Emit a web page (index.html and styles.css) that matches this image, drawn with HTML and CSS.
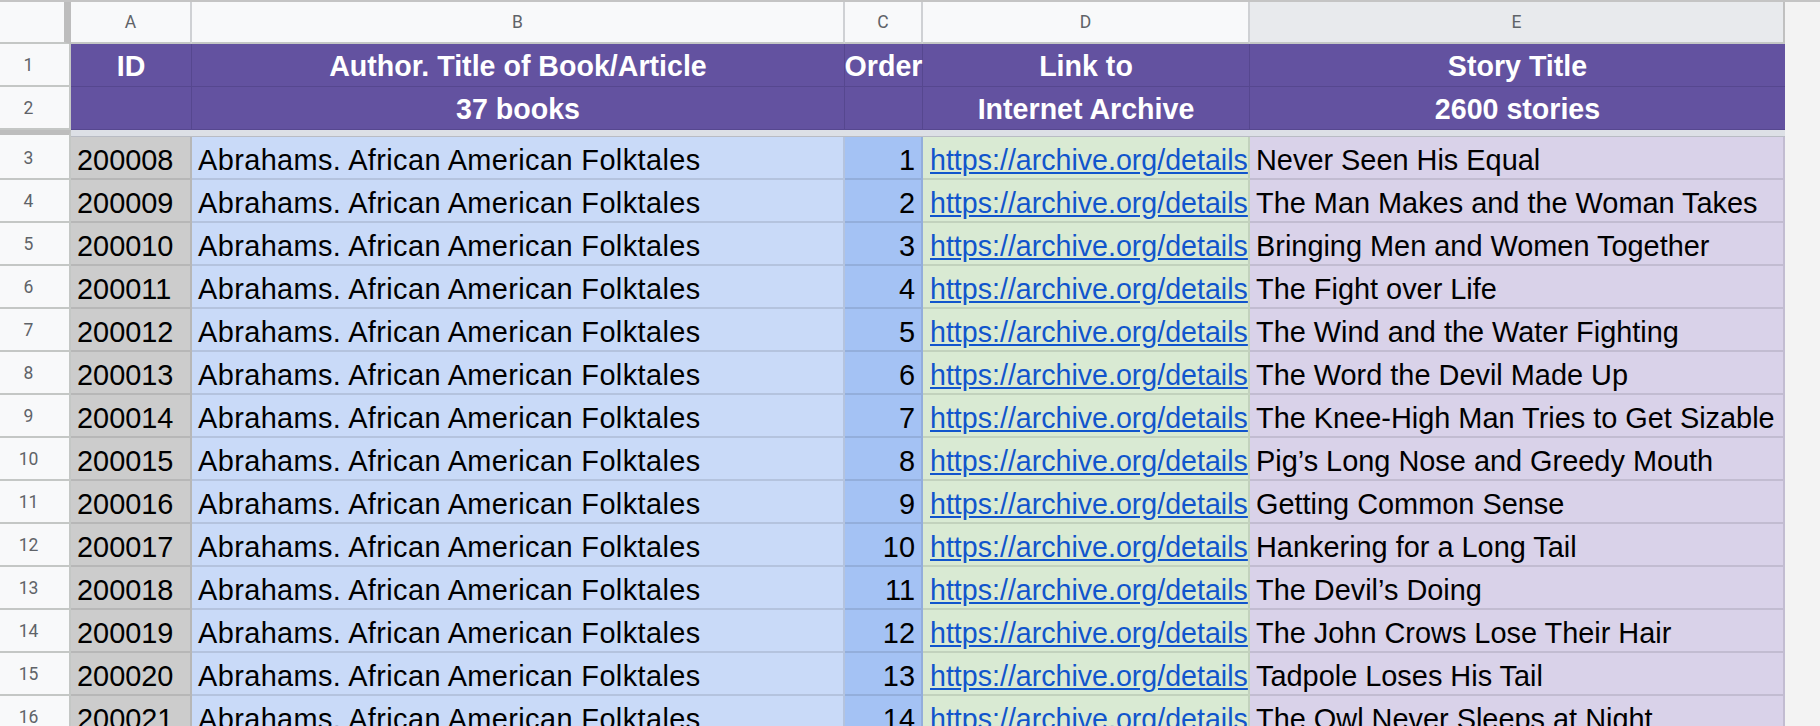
FILE: index.html
```html
<!DOCTYPE html>
<html lang="en">
<head>
<meta charset="utf-8">
<title>Folktales sheet</title>
<link rel="stylesheet" href="styles.css">
</head>
<body>
<div class="sheet">
  <div class="ch corner"></div>
  <div class="ch">A</div>
  <div class="ch">B</div>
  <div class="ch">C</div>
  <div class="ch">D</div>
  <div class="ch sel">E</div>
  <div class="ch fill"></div>

  <div class="rh">1</div>
  <div class="hd">ID</div>
  <div class="hd">Author. Title of Book/Article</div>
  <div class="hd">Order</div>
  <div class="hd">Link to</div>
  <div class="hd last">Story Title</div>
  <div class="fill"></div>

  <div class="rh">2</div>
  <div class="hd"></div>
  <div class="hd">37 books</div>
  <div class="hd"></div>
  <div class="hd">Internet Archive</div>
  <div class="hd last">2600 stories</div>
  <div class="fill"></div>

  <div class="fz-rh"></div>
  <div class="fz-data"></div>
  <div class="fill"></div>

  <div class="rh">3</div><div class="c id">200008</div><div class="c bk">Abrahams. African American Folktales</div><div class="c ord">1</div><div class="c lk"><a href="#">https://archive.org/details</a></div><div class="c st">Never Seen His Equal</div><div class="fill"></div>
  <div class="rh">4</div><div class="c id">200009</div><div class="c bk">Abrahams. African American Folktales</div><div class="c ord">2</div><div class="c lk"><a href="#">https://archive.org/details</a></div><div class="c st">The Man Makes and the Woman Takes</div><div class="fill"></div>
  <div class="rh">5</div><div class="c id">200010</div><div class="c bk">Abrahams. African American Folktales</div><div class="c ord">3</div><div class="c lk"><a href="#">https://archive.org/details</a></div><div class="c st">Bringing Men and Women Together</div><div class="fill"></div>
  <div class="rh">6</div><div class="c id">200011</div><div class="c bk">Abrahams. African American Folktales</div><div class="c ord">4</div><div class="c lk"><a href="#">https://archive.org/details</a></div><div class="c st">The Fight over Life</div><div class="fill"></div>
  <div class="rh">7</div><div class="c id">200012</div><div class="c bk">Abrahams. African American Folktales</div><div class="c ord">5</div><div class="c lk"><a href="#">https://archive.org/details</a></div><div class="c st">The Wind and the Water Fighting</div><div class="fill"></div>
  <div class="rh">8</div><div class="c id">200013</div><div class="c bk">Abrahams. African American Folktales</div><div class="c ord">6</div><div class="c lk"><a href="#">https://archive.org/details</a></div><div class="c st">The Word the Devil Made Up</div><div class="fill"></div>
  <div class="rh">9</div><div class="c id">200014</div><div class="c bk">Abrahams. African American Folktales</div><div class="c ord">7</div><div class="c lk"><a href="#">https://archive.org/details</a></div><div class="c st">The Knee-High Man Tries to Get Sizable</div><div class="fill"></div>
  <div class="rh">10</div><div class="c id">200015</div><div class="c bk">Abrahams. African American Folktales</div><div class="c ord">8</div><div class="c lk"><a href="#">https://archive.org/details</a></div><div class="c st">Pig’s Long Nose and Greedy Mouth</div><div class="fill"></div>
  <div class="rh">11</div><div class="c id">200016</div><div class="c bk">Abrahams. African American Folktales</div><div class="c ord">9</div><div class="c lk"><a href="#">https://archive.org/details</a></div><div class="c st">Getting Common Sense</div><div class="fill"></div>
  <div class="rh">12</div><div class="c id">200017</div><div class="c bk">Abrahams. African American Folktales</div><div class="c ord">10</div><div class="c lk"><a href="#">https://archive.org/details</a></div><div class="c st">Hankering for a Long Tail</div><div class="fill"></div>
  <div class="rh">13</div><div class="c id">200018</div><div class="c bk">Abrahams. African American Folktales</div><div class="c ord">11</div><div class="c lk"><a href="#">https://archive.org/details</a></div><div class="c st">The Devil’s Doing</div><div class="fill"></div>
  <div class="rh">14</div><div class="c id">200019</div><div class="c bk">Abrahams. African American Folktales</div><div class="c ord">12</div><div class="c lk"><a href="#">https://archive.org/details</a></div><div class="c st">The John Crows Lose Their Hair</div><div class="fill"></div>
  <div class="rh">15</div><div class="c id">200020</div><div class="c bk">Abrahams. African American Folktales</div><div class="c ord">13</div><div class="c lk"><a href="#">https://archive.org/details</a></div><div class="c st">Tadpole Loses His Tail</div><div class="fill"></div>
  <div class="rh">16</div><div class="c id">200021</div><div class="c bk">Abrahams. African American Folktales</div><div class="c ord">14</div><div class="c lk"><a href="#">https://archive.org/details</a></div><div class="c st">The Owl Never Sleeps at Night</div><div class="fill"></div>
</div>
</body>
</html>
```

FILE: styles.css
```css
* { box-sizing: border-box; }

html, body {
  margin: 0;
  padding: 0;
  height: 100%;
  overflow: hidden;
  background: #f3f3f3;
}

body {
  font-family: "Liberation Sans", Arial, sans-serif;
  color: #000;
}

.sheet {
  display: grid;
  grid-template-columns: 71px 121px 653px 78px 327px 535px 1fr;
  grid-template-rows: 42px 43px 43px 7px repeat(14, 43px);
  border-top: 2px solid #c4c4c4;
}

/* column header row */
.ch {
  background: #f8f9fa;
  border-right: 2px solid #cfd1d4;
  border-bottom: 2px solid #c4c7c5;
  color: #5f6368;
  font-family: Roboto, "Liberation Sans", sans-serif;
  font-size: 17.5px;
  display: flex;
  align-items: center;
  justify-content: center;
}

.ch.corner {
  border-right: 7px solid #bdbdbd;
}

.ch.sel {
  background: #e8eaed;
  border-right-color: #c0c0c0;
}

.ch.fill {
  background: #f3f3f3;
  border-right: 0;
  border-bottom: 0;
}

.fill {
  background: #f3f3f3;
}

/* row headers */
.rh {
  background: #f8f9fa;
  border-right: 2px solid #c4c7c5;
  border-bottom: 2px solid #c4c7c5;
  color: #5f6368;
  font-family: Roboto, "Liberation Sans", sans-serif;
  font-size: 17.5px;
  display: flex;
  align-items: center;
  justify-content: center;
  padding-right: 12px;
}

/* purple header cells */
.hd {
  background: #6352a0;
  border-right: 1px solid #56478f;
  border-bottom: 1px solid #56478f;
  color: #fff;
  font-weight: bold;
  font-size: 28.6px;
  line-height: 32px;
  white-space: nowrap;
  display: flex;
  align-items: center;
  justify-content: center;
  padding-top: 2px;
}

.hd.last {
  border-right: 0;
}

/* frozen divider */
.fz-rh {
  background: #f8f9fa;
  border-top: 5px solid #bdbdbd;
  border-right: 2px solid #c4c7c5;
}

.fz-data {
  grid-column: 2 / 7;
  background: #dde0e6;
  border-bottom: 1px solid #b9bcc4;
}

/* data cells */
.c {
  border-right: 2px solid rgba(0, 0, 0, 0.1);
  border-bottom: 2px solid rgba(0, 0, 0, 0.1);
  font-size: 28.9px;
  line-height: 32px;
  white-space: nowrap;
  overflow: hidden;
  display: flex;
  align-items: flex-end;
  padding: 0 6px 2px 6px;
}

.id { background: #cccccc; }
.bk { background: #c9daf8; letter-spacing: 0.4px; }
.ord { background: #a4c2f4; justify-content: flex-end; }
.lk { background: #d9ead3; padding-right: 0; padding-left: 7px; }
.st { background: #d9d2e9; }

.lk a {
  color: #1155cc;
  text-decoration: underline;
  font-size: 28.6px;
}
```
